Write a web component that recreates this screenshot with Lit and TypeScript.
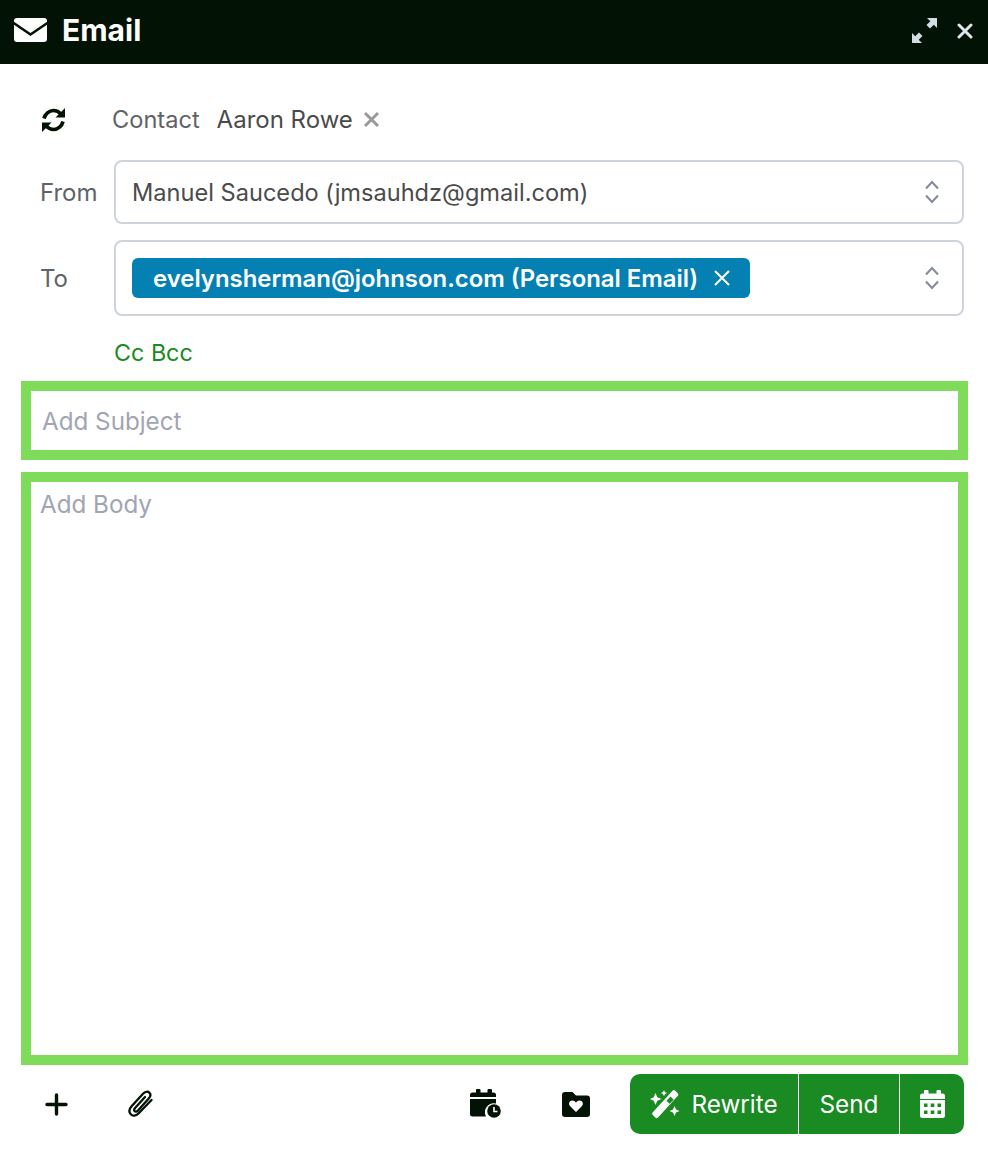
import { LitElement, html, css } from "lit";
import { customElement } from "lit/decorators.js";

@customElement("app-root")
export class AppRoot extends LitElement {
  static styles = css`
    :host { display: block; width: 988px; height: 1164px; background: #fff; font-family: "Inter", "Liberation Sans", sans-serif; color: #4b4b4b; overflow: hidden; }
    svg { display: block; flex: none; }
    .hdr { height: 64px; background: #021204; display: flex; align-items: center; padding: 0 14px; color: #fff; }
    .hdr .title { font-size: 30px; font-weight: 700; margin-left: 15px; flex: 1; line-height: 60px; height: 64px; }
    .hdr .exp { margin-right: 20px; margin-top: -4px; }
    .hdr .cl { margin-right: 1px; margin-top: -2px; }
    .hdr .env { margin-top: -4px; }
    .contact { height: 32px; margin-top: 40px; display: flex; align-items: center; padding-left: 41px; font-size: 24px; }
    .contact span { line-height: 30px; margin-top: -1px; }
    .contact .lab { margin-left: 46px; color: #5f6368; font-size: 23.600px; }
    .contact .name { margin-left: 17px; color: #4b4b4b; }
    .contact .x { margin-left: 10px; margin-top: -1px; }
    .row { display: flex; align-items: center; margin-left: 40px; margin-right: 24px; }
    .row .lab { width: 74px; font-size: 24px; color: #5f6368; }
    .box { flex: 1; border: 2px solid #cfd4dc; border-radius: 8px; box-sizing: border-box; display: flex; align-items: center; justify-content: space-between; padding: 0 23px 0 16px; font-size: 23.600px; color: #4b4b4b; }
    .from { margin-top: 24px; }
    .from .box { height: 64px; }
    .to { margin-top: 16px; }
    .to .box { height: 76px; }
    .chip { background: #0580b3; color: #fff; font-weight: 600; height: 40px; border-radius: 6px; display: flex; align-items: center; padding: 0 19px 0 21px; gap: 15px; font-size: 23.900px; }
    .cc { margin: 22px 0 0 114px; font-size: 23.300px; line-height: 30px; color: #1a8a22; height: 30px; }
    .green { border: 10px solid #7fdb5a; box-sizing: border-box; margin: 0 20px 0 21px; font-size: 24.200px; color: #a0a5b4; }
    .subject { margin-top: 13px; height: 79px; display: flex; align-items: center; padding: 1px 0 0 11px; }
    .body { margin-top: 12px; height: 593px; padding: 8px 0 0 9px; line-height: 30px; }
    .foot { margin: 9px 24px 0 45px; display: flex; align-items: center; height: 60px; }
    .clip { margin-left: 60px; }
    .sp { flex: 1; }
    .sched { margin-right: 60px; }
    .fold { margin-right: 40px; }
    .btns { display: flex; height: 60px; background: #1a8a22; border-radius: 10px; color: #fff; font-size: 24.300px; overflow: hidden; }
    .btn { display: flex; align-items: center; justify-content: center; box-sizing: border-box; }
    .btn span, .sd { line-height: 60px; }
    .btn + .btn { border-left: 1px solid #fff; }
    .rw { width: 168px; gap: 11px; }
    .sd { width: 101px; }
    .cal { width: 65px; }
  `;

  render() {
    return html`
      <div class="hdr">
        <svg class="env" width="33" height="24" viewBox="0 0 33 24"><path fill="#fff" d="M3 0h27a3 3 0 0 1 3 3v.8L16.500 15 0 3.800V3a3 3 0 0 1 3-3zM0 6.800 16.500 18 33 6.800V21a3 3 0 0 1-3 3H3a3 3 0 0 1-3-3z"/></svg>
        <div class="title">Email</div>
        <svg class="exp" width="25" height="25" viewBox="0 0 25 25"><path fill="#d3dce6" d="M15 0h9.500a.5.500 0 0 1 .5.500V10l-3.200-3.200-3.800 3.800-3.500-3.500 3.800-3.800zM10 25H.5a.5.500 0 0 1-.5-.5V15l3.200 3.200 3.800-3.800 3.500 3.500-3.800 3.800z"/></svg>
        <svg class="cl" width="16" height="16" viewBox="0 0 16 16"><path stroke="#dfe5ec" stroke-width="3" stroke-linecap="round" d="M2 2l12 12M14 2 2 14"/></svg>
      </div>
      <div class="contact">
        <svg width="25" height="24" viewBox="0 0 25 24"><path fill="none" stroke="#021204" stroke-width="3.600" d="M3 10.500C4 6 8 2.500 12.500 2.500c3 0 5.500 1.300 7.500 3.800M22 13.500C21 18 17 21.500 12.500 21.500c-3 0-5.500-1.300-7.500-3.800"/><path fill="#021204" d="M24 0v9.500h-9.500zM1 24v-9.500h9.500z"/></svg>
        <span class="lab">Contact</span><span class="name">Aaron Rowe</span>
        <svg class="x" width="17" height="17" viewBox="0 0 17 17"><path stroke="#9a9a9a" stroke-width="3" d="M2 2l13 13M15 2 2 15"/></svg>
      </div>
      <div class="row from"><div class="lab">From</div><div class="box"><span>Manuel Saucedo (jmsauhdz@gmail.com)</span>${this.updown()}</div></div>
      <div class="row to"><div class="lab">To</div><div class="box">
        <div class="chip"><span>evelynsherman@johnson.com (Personal Email)</span><svg width="18" height="18" viewBox="0 0 18 18"><path stroke="#fff" stroke-width="2" d="M2 2l14 14M16 2 2 16"/></svg></div>${this.updown()}</div></div>
      <div class="cc">Cc Bcc</div>
      <div class="green subject">Add Subject</div>
      <div class="green body">Add Body</div>
      <div class="foot">
        <svg width="23" height="23" viewBox="0 0 23 23"><path stroke="#021204" stroke-width="3.400" stroke-linecap="round" d="M11.500 2v19M2 11.500h19"/></svg>
        <svg class="clip" width="25" height="28" viewBox="0 0 25 28"><path fill="none" stroke="#021204" stroke-width="2.300" stroke-linecap="round" d="M23.500 10 11 23c-2.800 3-6.400 3.300-8.200 1.300S1 19 3.800 16L15 3.800c2.200-2.300 4.800-2.600 6.300-1.200 1.500 1.500 1.300 4-.8 6.200L10 20.500c-1.200 1.300-2.500 1.500-3.300.7-.8-.8-.6-2.200.6-3.500L17 7"/></svg>
        <div class="sp"></div>
        <svg class="sched" width="32" height="30" viewBox="0 0 32 30"><path fill="#021204" d="M7 0h2.500a1 1 0 0 1 1 1v2.500h7V1a1 1 0 0 1 1-1H21a1 1 0 0 1 1 1v2.500h1.500A2.500 2.500 0 0 1 26 6v2H0V6a2.500 2.500 0 0 1 2.500-2.500H6V1a1 1 0 0 1 1-1zM0 10h26v4.500a9 9 0 0 0-10 13H2.500A2.500 2.500 0 0 1 0 25z"/><circle cx="24" cy="22" r="6.800" fill="#021204"/><path fill="none" stroke="#fff" stroke-width="1.600" d="M24 18v4.500h3.500"/></svg>
        <svg class="fold" width="28" height="25" viewBox="0 0 28 25"><path fill="#021204" d="M3 0h7.500l3.500 3.500h11a3 3 0 0 1 3 3V22a3 3 0 0 1-3 3H3a3 3 0 0 1-3-3V3a3 3 0 0 1 3-3z"/><path fill="#fff" d="M14 20l-6-6c-2-2.300-.5-5.500 2.200-5.500 1.600 0 3 .8 3.800 2.300.8-1.500 2.200-2.300 3.800-2.300 2.700 0 4.200 3.200 2.200 5.500z"/></svg>
        <div class="btns">
          <div class="btn rw">
            <svg width="30" height="29" viewBox="0 0 30 29"><g fill="#fff"><path d="M22.500.8a2 2 0 0 1 2.800 0l2.400 2.400a2 2 0 0 1 0 2.800L8 27.500a2 2 0 0 1-2.800 0L2.800 25a2 2 0 0 1 0-2.800zM20.500 6.500l-4 4.200 3 3 4.200-4z" fill-rule="evenodd"/><path d="M5.500 3 7.300 7.200 11.500 9 7.300 10.800 5.500 15 3.700 10.800 0 9l3.700-1.800zM14 0l1 2.200L17.200 3 15 4l-1 2.300L13 4l-2.200-1L13 2.200zM24.500 16l1.500 3.500 3.500 1.500-3.500 1.500-1.500 3.500-1.500-3.500-3.500-1.500 3.500-1.500z"/></g></svg>
            <span>Rewrite</span>
          </div>
          <div class="btn sd">Send</div>
          <div class="btn cal">
            <svg width="25" height="28" viewBox="0 0 25 28"><path fill="#fff" fill-rule="evenodd" d="M5 0h2.500a1 1 0 0 1 1 1v2.500h8V1a1 1 0 0 1 1-1H20a1 1 0 0 1 1 1v2.500h1.500A2.500 2.500 0 0 1 25 6v3H0V6a2.500 2.500 0 0 1 2.500-2.500H4V1a1 1 0 0 1 1-1zM0 10h25v15.500a2.500 2.500 0 0 1-2.500 2.500h-20A2.500 2.500 0 0 1 0 25.500zM4 13.500v3.500h3.500v-3.500zm6.700 0v3.500h3.600v-3.500zm6.800 0v3.500H21v-3.500zM4 20.500V24h3.500v-3.500zm6.700 0V24h3.600v-3.500zm6.800 0V24H21v-3.500z"/></svg>
          </div>
        </div>
      </div>
    `;
  }

  updown() {
    return html`<svg width="14" height="24" viewBox="0 0 14 24"><path fill="none" stroke="#868e99" stroke-width="2.200" d="M1 8.500 7 2l6 6.500M1 15.500 7 22l6-6.500"/></svg>`;
  }
}
